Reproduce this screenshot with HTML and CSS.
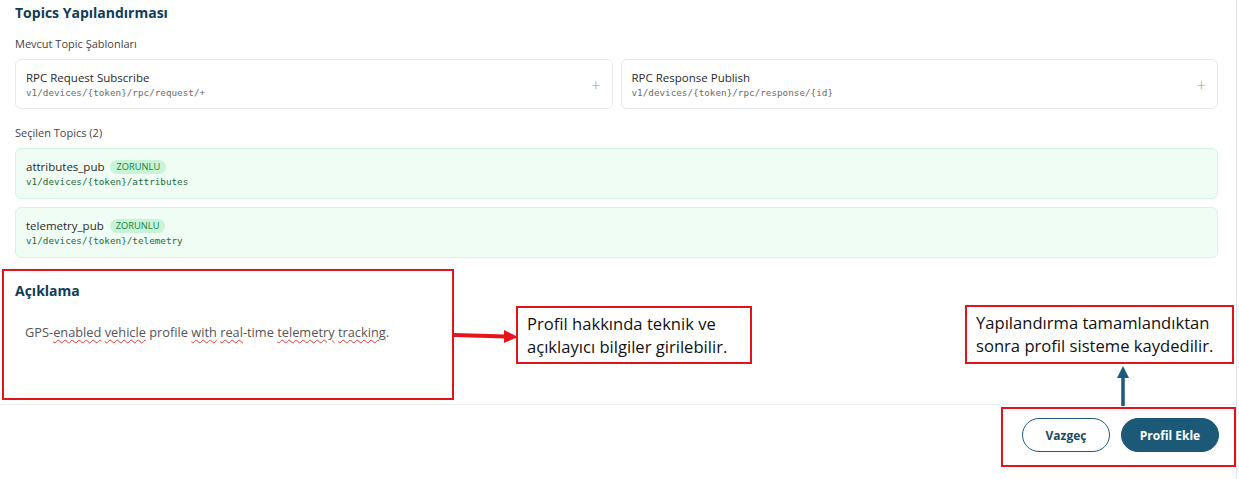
FILE: index.html
```html
<!DOCTYPE html>
<html lang="tr">
<head>
<meta charset="utf-8">
<title>Topics Yapılandırması</title>
<link rel="stylesheet" href="styles.css">
</head>
<body>
<div class="panel">
  <div class="content">
    <h2 class="section-title">Topics Yapılandırması</h2>
    <div class="label">Mevcut Topic Şablonları</div>
    <div class="templates">
      <div class="tcard">
        <div class="tinfo">
          <div class="tname">RPC Request Subscribe</div>
          <div class="tpath">v1/devices/{token}/rpc/request/+</div>
        </div>
        <span class="plus">+</span>
      </div>
      <div class="tcard">
        <div class="tinfo">
          <div class="tname">RPC Response Publish</div>
          <div class="tpath">v1/devices/{token}/rpc/response/{id}</div>
        </div>
        <span class="plus">+</span>
      </div>
    </div>
    <div class="label label-selected">Seçilen Topics (2)</div>
    <div class="selected">
      <div class="scard">
        <div class="sname">attributes_pub <span class="badge">ZORUNLU</span></div>
        <div class="spath">v1/devices/{token}/attributes</div>
      </div>
      <div class="scard">
        <div class="sname">telemetry_pub <span class="badge">ZORUNLU</span></div>
        <div class="spath">v1/devices/{token}/telemetry</div>
      </div>
    </div>
    <h2 class="section-title desc-title">Açıklama</h2>
    <div class="desc">GPS-<span class="sp">enabled</span> <span class="sp">vehicle</span> profile <span class="sp">with</span> <span class="sp">real</span>-time <span class="sp">telemetry</span> <span class="sp">tracking</span>.</div>
  </div>
  <div class="footer">
    <button class="btn btn-outline">Vazgeç</button>
    <button class="btn btn-primary">Profil Ekle</button>
  </div>
</div>

<div class="anno anno-desc"></div>
<div class="anno anno-buttons"></div>
<div class="callout callout-1">Profil hakkında teknik ve<br>açıklayıcı bilgiler girilebilir.</div>
<div class="callout callout-2">Yapılandırma tamamlandıktan<br>sonra profil sisteme kaydedilir.</div>
<svg class="arrow-red" width="70" height="14" viewBox="0 0 70 14">
  <line x1="0" y1="6" x2="52" y2="7.5" stroke="#e8141b" stroke-width="4"/>
  <polygon points="50,1 64,8 50,14" fill="#e8141b"/>
</svg>
<svg class="arrow-blue" width="14" height="40" viewBox="0 0 14 40">
  <line x1="7" y1="10" x2="7" y2="40" stroke="#1d5b78" stroke-width="3.5"/>
  <polygon points="1,12 7,0 13,12" fill="#1d5b78"/>
</svg>
</body>
</html>
```
FILE: styles.css
```css
* { box-sizing: border-box; }
html, body { margin: 0; padding: 0; background: #fff; }
body {
  font-family: "Open Sans", Lato, sans-serif;
  color: #333;
  width: 1239px;
  height: 479px;
  overflow: hidden;
  position: relative;
}
.panel {
  width: 1237px;
  border-right: 1px solid #e2e4e8;
}
.content {
  padding: 3px 18px 0 15px;
  height: 404px;
}
.section-title {
  margin: 0;
  font-size: 14px;
  line-height: 20px;
  font-weight: 700;
  color: #0e3c58;
}
.label {
  margin-top: 14px;
  font-size: 11px;
  line-height: 14px;
  color: #444;
}
.templates {
  margin-top: 8px;
  display: grid;
  grid-template-columns: 1fr 1fr;
  gap: 8px;
}
.tcard {
  height: 50px;
  border: 1px solid #e6e8ec;
  border-radius: 6px;
  display: flex;
  align-items: center;
  justify-content: space-between;
  padding: 1px 10px 0 10px;
}
.tname { font-size: 11.5px; line-height: 15px; color: #2a2a2a; }
.tpath, .spath {
  font-family: "DejaVu Sans Mono", "Liberation Mono", monospace;
  font-size: 9.3px;
  line-height: 13px;
  margin-top: 1px;
}
.tpath { color: #6b6b6b; }
.plus { font-size: 16px; color: #9a9a9a; font-weight: 300; margin-right: 1px; }
.label-selected { margin-top: 17px; }
.selected {
  margin-top: 8px;
  display: flex;
  flex-direction: column;
  gap: 8px;
}
.scard {
  height: 51px;
  background: #f0fdf4;
  border: 1px solid #d3f5df;
  border-radius: 6px;
  padding: 10px 10px 0 10px;
}
.sname { font-size: 11.5px; line-height: 16px; color: #2a2a2a; display: flex; align-items: center; gap: 6px; }
.badge {
  background: #c9f3d6;
  color: #19803d;
  font-size: 9.3px;
  line-height: 14px;
  padding: 0 6px;
  border-radius: 8px;
}
.spath { color: #1d6a37; margin-top: 0; }
.desc-title { margin-top: 23px; }
.desc {
  margin-top: 22px;
  padding-left: 10px;
  font-size: 12.8px;
  line-height: 18px;
  color: #555;
}
.sp {
  text-decoration: underline wavy #e53935;
  text-decoration-thickness: 1px;
  text-underline-offset: 2px;
}
.footer {
  border-top: 1px solid #eceef1;
  padding: 13px 17px 0 0;
  display: flex;
  justify-content: flex-end;
  gap: 11px;
  height: 75px;
}
.btn {
  height: 34px;
  border-radius: 17px;
  font-family: "Open Sans", Lato, sans-serif;
  font-weight: 700;
  font-size: 12px;
  cursor: pointer;
}
.btn-outline {
  width: 88px;
  background: #fff;
  border: 1px solid #1f5d7a;
  color: #1e4a63;
}
.btn-primary {
  width: 98px;
  background: #1c5977;
  border: 1px solid #1c5977;
  color: #fff;
}
.anno {
  position: absolute;
  border: 2px solid #e0141b;
}
.anno-desc { left: 2px; top: 269px; width: 452px; height: 131px; }
.anno-buttons { left: 1001px; top: 407px; width: 235px; height: 60px; }
.callout {
  position: absolute;
  border: 2px solid #e0141b;
  background: #fff;
  font-family: "Open Sans", "Liberation Sans", sans-serif;
  font-size: 16.6px;
  line-height: 23px;
  color: #111;
  padding: 4px 0 0 9px;
  white-space: nowrap;
}
.callout-1 { left: 516px; top: 306px; width: 236px; height: 58px; }
.callout-2 { left: 965px; top: 305px; width: 269px; height: 59px; }
.arrow-red { position: absolute; left: 454px; top: 329px; }
.arrow-blue { position: absolute; left: 1116px; top: 366px; }
```
